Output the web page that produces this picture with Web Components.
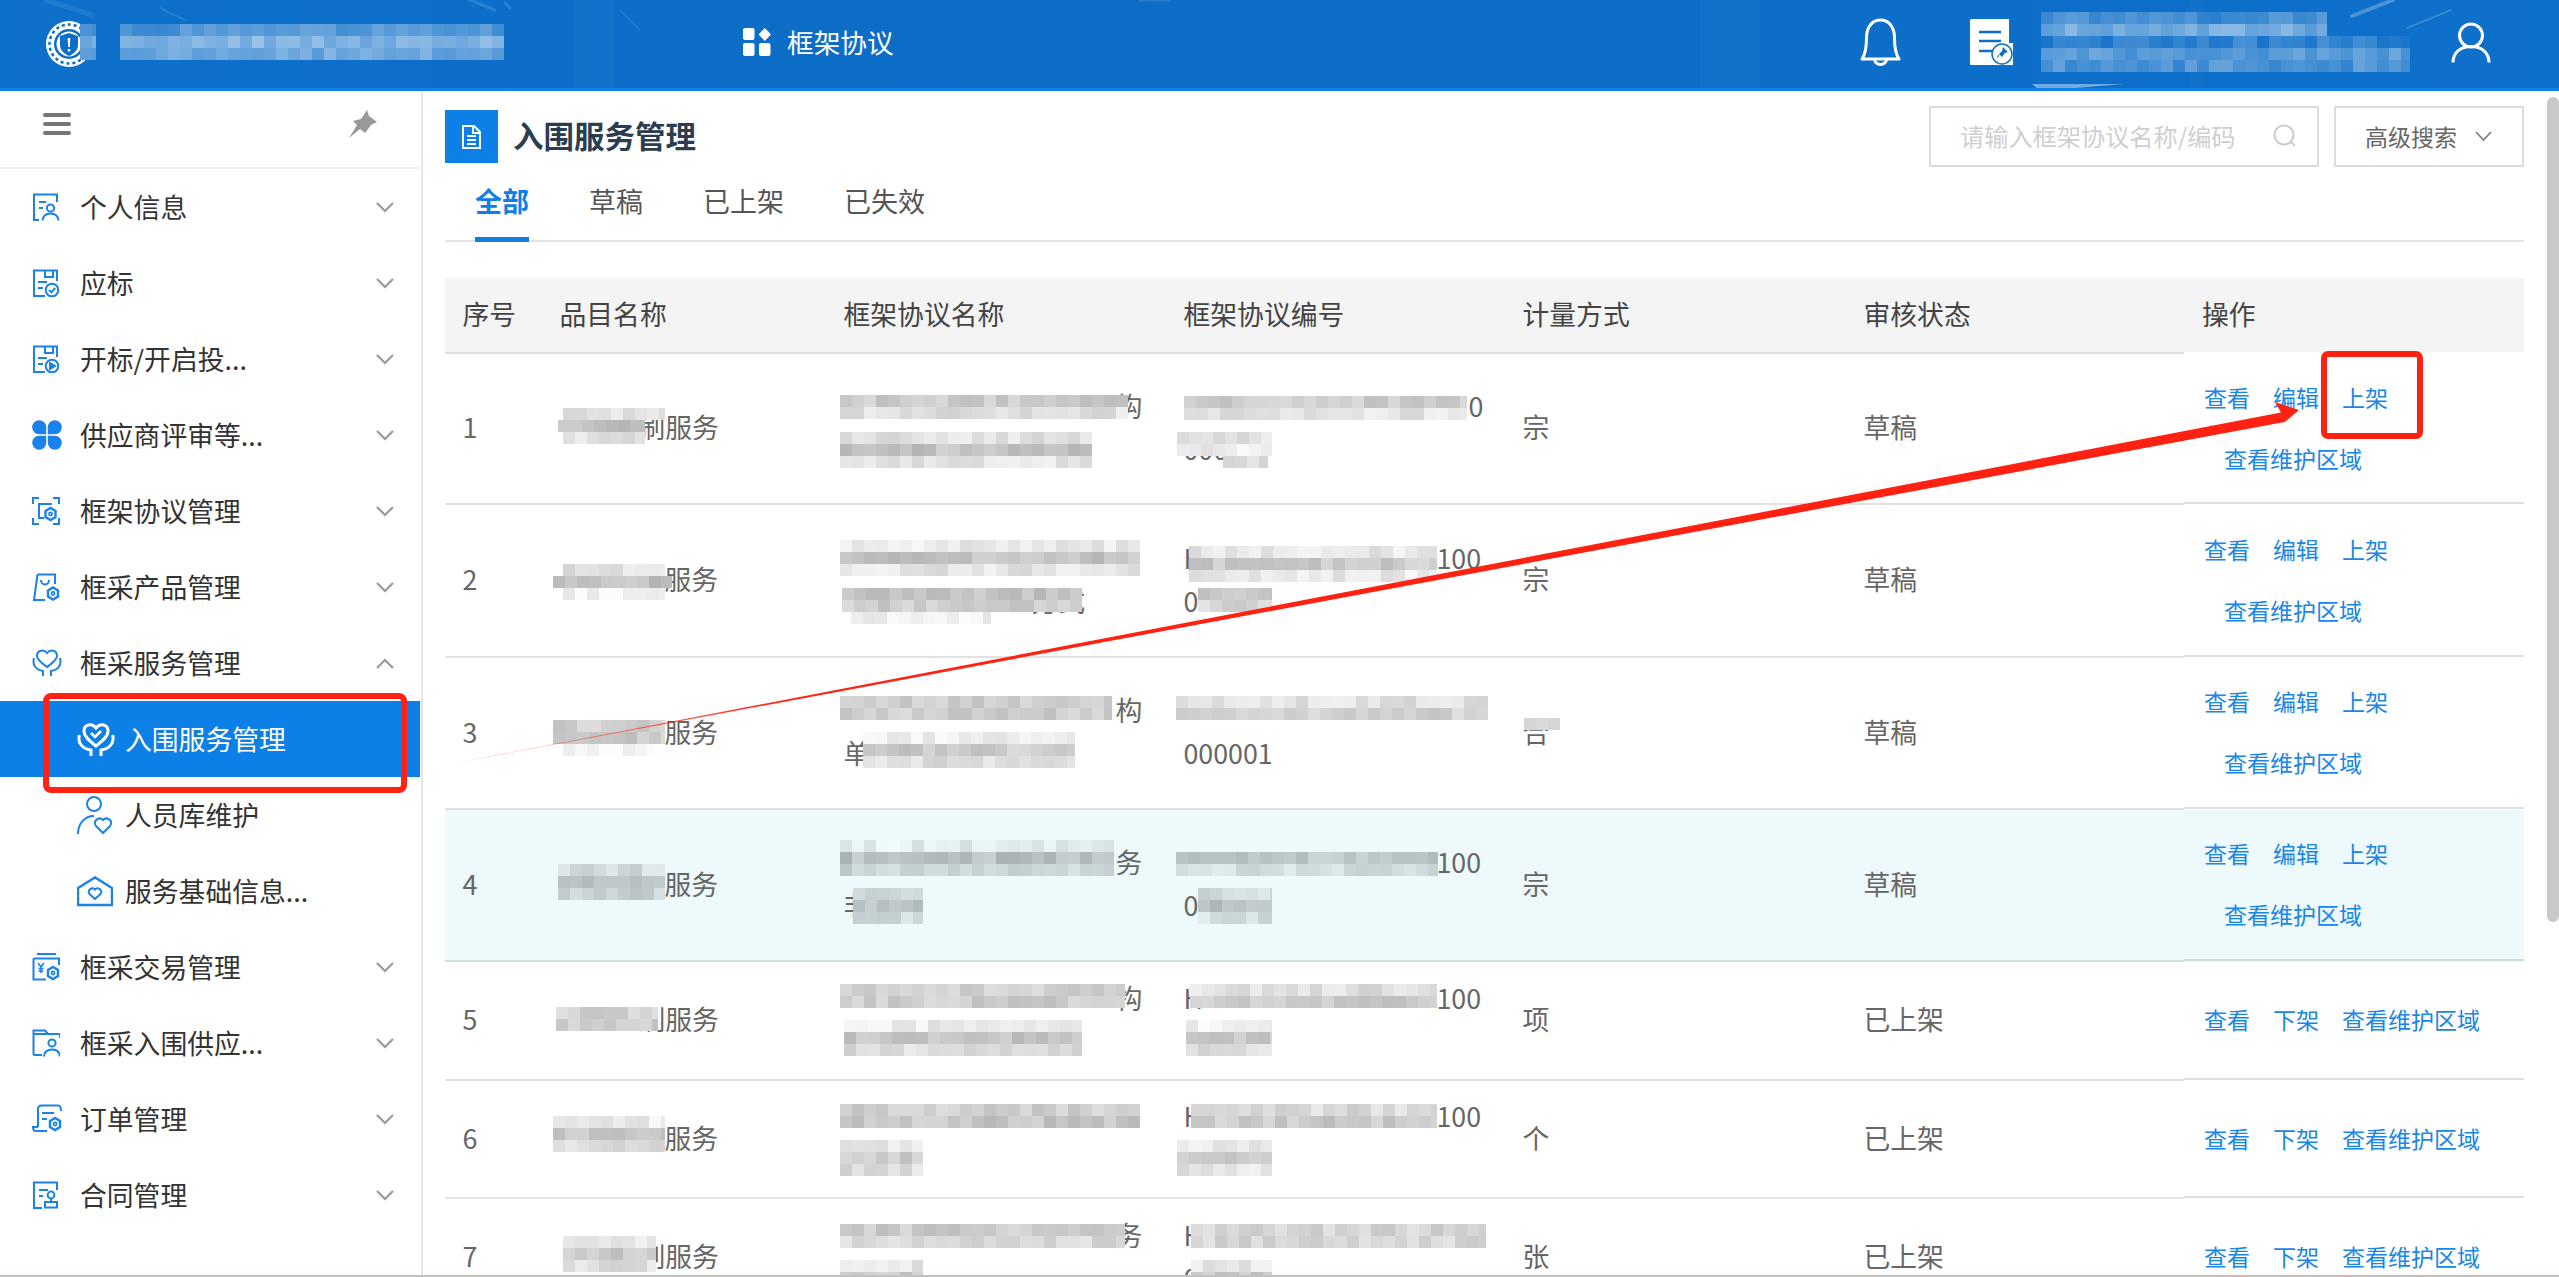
<!DOCTYPE html>
<html lang="zh-CN"><head><meta charset="utf-8"><title>入围服务管理</title>
<style>
html,body{margin:0;padding:0;background:#fff;height:100%;overflow:hidden}
body{font-family:"Noto Sans CJK SC","Liberation Sans",sans-serif;--cols:97px 284px 340px 339px 341px 338px 340px}
</style></head><body>
<app-shell>
  <app-header slot="header"></app-header>
  <side-menu slot="side">
    <menu-item icon="profile" arrow="down">个人信息</menu-item>
    <menu-item icon="bid" arrow="down">应标</menu-item>
    <menu-item icon="open" arrow="down">开标/开启投...</menu-item>
    <menu-item icon="clover" arrow="down">供应商评审等...</menu-item>
    <menu-item icon="frame" arrow="down">框架协议管理</menu-item>
    <menu-item icon="bag" arrow="down">框采产品管理</menu-item>
    <menu-item icon="hands" arrow="up">框采服务管理</menu-item>
    <menu-item icon="handscheck" sub active>入围服务管理</menu-item>
    <menu-item icon="personheart" sub>人员库维护</menu-item>
    <menu-item icon="house" sub>服务基础信息...</menu-item>
    <menu-item icon="trade" arrow="down">框采交易管理</menu-item>
    <menu-item icon="folder" arrow="down">框采入围供应...</menu-item>
    <menu-item icon="scroll" arrow="down">订单管理</menu-item>
    <menu-item icon="contract" arrow="down">合同管理</menu-item>
  </side-menu>
  <main-pane slot="main">
    <page-head>入围服务管理</page-head>
    <tab-bar>
      <tab-item active>全部</tab-item><tab-item>草稿</tab-item><tab-item>已上架</tab-item><tab-item>已失效</tab-item>
    </tab-bar>
    <data-table>
      <table-row h="76" head>
        <t-cell head>序号</t-cell><t-cell head>品目名称</t-cell><t-cell head>框架协议名称</t-cell><t-cell head>框架协议编号</t-cell><t-cell head>计量方式</t-cell><t-cell head>审核状态</t-cell><t-cell head last>操作</t-cell>
      </table-row>
      <table-row h="151">
        <t-cell>1</t-cell><t-cell><t-line pad="79">刷服务</t-line></t-cell>
        <t-cell><t-line pad="272">构</t-line><t-line></t-line></t-cell>
        <t-cell><t-line pad="285">0</t-line><t-line>000</t-line></t-cell>
        <t-cell>宗</t-cell><t-cell>草稿</t-cell>
        <act-cell><act-line><act-link>查看</act-link><act-link>编辑</act-link><act-link>上架</act-link></act-line><act-line second><act-link>查看维护区域</act-link></act-line></act-cell>
      </table-row>
      <table-row h="153">
        <t-cell>2</t-cell><t-cell><t-line pad="105">服务</t-line></t-cell>
        <t-cell><t-line></t-line><t-line pad="188">方式</t-line></t-cell>
        <t-cell><t-line><t-seg w="253">H</t-seg>100</t-line><t-line>0</t-line></t-cell>
        <t-cell>宗</t-cell><t-cell>草稿</t-cell>
        <act-cell><act-line><act-link>查看</act-link><act-link>编辑</act-link><act-link>上架</act-link></act-line><act-line second><act-link>查看维护区域</act-link></act-line></act-cell>
      </table-row>
      <table-row h="152">
        <t-cell>3</t-cell><t-cell><t-line pad="105">服务</t-line></t-cell>
        <t-cell><t-line pad="272">构</t-line><t-line>单</t-line></t-cell>
        <t-cell><t-line></t-line><t-line>000001</t-line></t-cell>
        <t-cell>合</t-cell><t-cell>草稿</t-cell>
        <act-cell><act-line><act-link>查看</act-link><act-link>编辑</act-link><act-link>上架</act-link></act-line><act-line second><act-link>查看维护区域</act-link></act-line></act-cell>
      </table-row>
      <table-row h="152" hl>
        <t-cell hl>4</t-cell><t-cell hl><t-line pad="105">服务</t-line></t-cell>
        <t-cell hl><t-line pad="272">务</t-line><t-line>非</t-line></t-cell>
        <t-cell hl><t-line pad="253">100</t-line><t-line>0</t-line></t-cell>
        <t-cell hl>宗</t-cell><t-cell hl>草稿</t-cell>
        <act-cell hl><act-line><act-link>查看</act-link><act-link>编辑</act-link><act-link>上架</act-link></act-line><act-line second><act-link>查看维护区域</act-link></act-line></act-cell>
      </table-row>
      <table-row h="119">
        <t-cell>5</t-cell><t-cell><t-line pad="79">刷服务</t-line></t-cell>
        <t-cell><t-line pad="272">构</t-line><t-line></t-line></t-cell>
        <t-cell><t-line><t-seg w="253">H</t-seg>100</t-line><t-line></t-line></t-cell>
        <t-cell>项</t-cell><t-cell>已上架</t-cell>
        <act-cell><act-line><act-link>查看</act-link><act-link>下架</act-link><act-link>查看维护区域</act-link></act-line></act-cell>
      </table-row>
      <table-row h="118">
        <t-cell>6</t-cell><t-cell><t-line pad="105">服务</t-line></t-cell>
        <t-cell><t-line></t-line><t-line>非</t-line></t-cell>
        <t-cell><t-line><t-seg w="253">H</t-seg>100</t-line><t-line></t-line></t-cell>
        <t-cell>个</t-cell><t-cell>已上架</t-cell>
        <act-cell><act-line><act-link>查看</act-link><act-link>下架</act-link><act-link>查看维护区域</act-link></act-line></act-cell>
      </table-row>
      <table-row h="119">
        <t-cell>7</t-cell><t-cell><t-line pad="79">刷服务</t-line></t-cell>
        <t-cell><t-line pad="272">务</t-line><t-line></t-line></t-cell>
        <t-cell><t-line>H</t-line><t-line>0</t-line></t-cell>
        <t-cell>张</t-cell><t-cell>已上架</t-cell>
        <act-cell><act-line><act-link>查看</act-link><act-link>下架</act-link><act-link>查看维护区域</act-link></act-line></act-cell>
      </table-row>
    </data-table>
  </main-pane>
  <annotation-layer slot="over"></annotation-layer>
</app-shell>
<script>
const B='#1a82e8';
function gear(x,y){return `<path d="M${x-5} ${y-3}L${x} ${y-6}L${x+5} ${y-3}V${y+3}L${x} ${y+6}L${x-5} ${y+3}Z" stroke-width="2.4"/><circle cx="${x}" cy="${y}" r="1.6" stroke-width="1.6"/>`;}
const ICONS={
 profile:[28,`<path d="M25 9V1.5H2V27H7"/><path d="M7 9H14M7 15H11"/><circle cx="18.500" cy="15" r="3.600"/><path d="M10.500 27.500C11 22.500 14.500 20.500 18.500 20.500C22.500 20.500 26 22.500 26.500 27.500"/>`],
 bid:[28,`<path d="M25 12V1.500H2V27H13"/><path d="M13 1.500V8H21V1.500"/><path d="M6 13H15M6 19H11"/><circle cx="20" cy="21" r="6.300"/><path d="M17 21L19.300 23.300L23.200 19"/>`],
 open:[28,`<path d="M25 12V1.500H2V27H13"/><path d="M13 1.500V8H21V1.500"/><path d="M6 13H15M6 19H11"/><circle cx="20" cy="21" r="6.300"/><path d="M18 18L23 21L18 24Z" fill="${B}"/>`],
 clover:[30,`<g fill="${B}" stroke="none"><path d="M14.200 14.200H7.200A7 7 0 1 1 14.200 7.200Z"/><path d="M15.800 14.200H22.800A7 7 0 1 0 15.800 7.200Z"/><path d="M14.200 15.800H7.200A7 7 0 1 0 14.200 22.800Z"/><path d="M15.800 15.800H22.800A7 7 0 1 1 15.800 22.800Z"/></g>`],
 frame:[28,`<path d="M1 7V1H7M21 1H27V7M1 21V27H7M21 27H27V21"/><path d="M20 7H7V21H12"/>${gear(18.500,17)}`],
 bag:[28,`<path d="M5.500 1.500H23V11M5.500 1.500L2 27H13"/><path d="M9 7C9 13 17 13 17 7"/>${gear(21,20.500)}`],
 hands:[30,`<path d="M15 5C12 1 5 2 5 8C5 12 11 16 15 19C19 16 25 12 25 8C25 2 18 1 15 5Z"/><path d="M2 10C0 17 4 22 11 23V28M28 10C30 17 26 22 19 23V28"/>`],
 personheart:[36,`<circle cx="17" cy="8" r="7"/><path d="M1 38C1 27 8 20 17 20"/><path d="M26 37L19 30C15 25 22 20 26 24C30 20 37 25 33 30Z"/>`],
 house:[36,`<path d="M1 12L18 1.500L35 12V29H1Z" stroke-width="2.400"/><path d="M18 23L12.500 18C9.500 14 15.500 10.500 18 13.500C20.500 10.500 26.500 14 23.500 18Z"/>`],
 trade:[28,`<path d="M5 1H24"/><path d="M1.500 5.500H27V12M1.500 5.500V26.500H14"/><path d="M6 10L9 14L12 10M9 14V20M6.500 15.500H11.500M6.500 18H11.500" stroke-width="1.600"/>${gear(21,20)}`],
 folder:[28,`<path d="M1.500 26V1.500H13L16 5H28V9M1.500 5H16"/><path d="M1.500 26H10"/><circle cx="20" cy="14" r="3.600"/><path d="M12 27.500C12.500 22.500 16 20.500 20 20.500C24 20.500 27.500 22.500 28 27.500"/>`],
 scroll:[30,`<path d="M6 23V5C6 2.500 7.500 1.500 10 1.500H26C28.500 1.500 29 3.500 29 7"/><path d="M10 9H22M10 15H15"/><path d="M6 23H1C1 26 2.500 27 4 27H15"/>${gear(23,20)}`],
 contract:[28,`<path d="M25 9V1.500H2V27H10"/><path d="M7 9H16M7 15H11"/><circle cx="19" cy="14" r="3.400"/><path d="M19 17.500V20.500"/><path d="M13 21H25V26.500H13Z"/>`]
};
function iconSvg(name){
 if(name==='handscheck')return `<svg width="38" height="35" viewBox="0 0 38 35" fill="none" stroke="#fff" stroke-width="3"><path d="M19 6C15 1 7 2 7 9C7 15 14 20 19 24C24 20 31 15 31 9C31 2 23 1 19 6Z"/><path d="M14 11L18 15L24 9" stroke-width="2.600"/><path d="M2.500 13C0 21 6 27 14 28V34M35.500 13C38 21 32 27 24 28V34"/></svg>`;
 const[n,s]=ICONS[name];
 const w=(name==='personheart'||name==='house')?36:(n===30?30:28), h=name==='personheart'?39:(name==='house'?31:n);
 return `<svg width="${w}" height="${h}" viewBox="0 0 ${w} ${h}" fill="none" stroke="${B}" stroke-width="2">${s}</svg>`;
}
function mk(name,html,init){
 customElements.define(name,class extends HTMLElement{
  constructor(){super();this.attachShadow({mode:'open'}).innerHTML=html;}
  connectedCallback(){init&&init(this);}
 });
}
mk('app-shell',`<style>:host{display:grid;position:relative;width:2559px;height:1277px;overflow:hidden;grid-template-columns:423px 1fr;grid-template-rows:91px 1fr;box-sizing:border-box;border-bottom:2px solid #c4c0bd;background:#fff}
.h{grid-column:1/3}.o{position:absolute;inset:0;pointer-events:none}</style>
<div class="h"><slot name="header"></slot></div><slot name="side"></slot><slot name="main"></slot><div class="o"><slot name="over"></slot></div>`);

mk('app-header',`<style>:host{display:flex;align-items:center;position:relative;height:91px;box-sizing:border-box;border-bottom:3px solid #0e80e6;background:linear-gradient(90deg,#0d70cb 0,#0c6cc6 45%,#0d70ca 100%);color:#fff;overflow:hidden}
.tex{position:absolute;left:0;top:0}
.logo{margin-left:46px;display:block;position:relative}
.nav{position:absolute;left:743px;top:28px;display:flex;align-items:center;gap:15px;font-size:26.700px;line-height:28px;height:28px}
.r{position:relative;margin-left:auto;display:flex;align-items:flex-start;height:100%}
.bell{margin-top:18px;margin-right:69px}.doc{margin-top:19px}.user{margin-top:22px;margin-left:438px;margin-right:68px}
</style>
<svg class="tex" width="2559" height="91" fill="none"><g stroke="#fff" stroke-linecap="round"><path d="M46 0L92 15" stroke-width="5" opacity=".08"/><path d="M160 8L185 20" stroke-width="2" opacity=".1"/><path d="M470 0L495 10M505 3L510 8" stroke-width="3" opacity=".12"/><path d="M620 10L640 30" stroke-width="1.500" opacity=".1"/><path d="M2352 16L2393 0" stroke-width="4" opacity=".25"/><path d="M2407 28L2451 10" stroke-width="1.500" opacity=".2"/><path d="M1140 0L1170 0" stroke-width="3" opacity=".12"/></g><g fill="#fff" opacity=".025"><rect x="575" width="40" height="91"/><rect x="1700" width="60" height="91"/><rect x="2190" width="14" height="91"/></g><polygon points="2032,84 2124,84 2076,88 2040,91" fill="#6fabe2"/></svg>
<svg class="logo" width="46" height="48" viewBox="0 0 46 48"><circle cx="23" cy="24" r="23" fill="#fff"/><circle cx="23" cy="24" r="19.500" fill="none" stroke="#0d6ec8" stroke-width="2.500" stroke-dasharray="3 3"/><circle cx="23" cy="24" r="15" fill="#0d6ec8"/><circle cx="23" cy="24" r="12.500" fill="#fff"/><path d="M23 13L32 16V25C32 31 27 34 23 36C19 34 14 31 14 25V16Z" fill="#0d6ec8"/><path d="M21.700 18H24.300L23.800 27H22.200Z M21.800 29H24.200V31.500H21.800Z" fill="#fff"/></svg>
<div class="nav"><svg width="29" height="28" viewBox="0 0 29 28" fill="#fff"><rect width="11.500" height="12" rx="2"/><rect y="15" width="11.500" height="13" rx="2"/><rect x="16" y="15" width="11.500" height="13" rx="2"/><path d="M21.800 0L28 6.500L21.800 13L15.600 6.500Z"/></svg><span>框架协议</span></div>
<div class="r">
<svg class="bell" width="41" height="48" viewBox="0 0 41 48" fill="none" stroke="#fff" stroke-width="3"><path d="M2 41C6 35 6.500 29 6.500 20C6.500 8 13 2 20.500 2C28 2 34.500 8 34.500 20C34.500 29 35 35 39 41Z" stroke-linejoin="round"/><path d="M14.500 42A6.300 6.300 0 0 0 26.500 42"/></svg>
<svg class="doc" width="43" height="46" viewBox="0 0 43 46"><path d="M0 1.500A1.500 1.500 0 0 1 1.500 0H39V24H43V46H1.500A1.500 1.500 0 0 1 0 44.500Z" fill="#fff"/><path d="M9 13H31M9 22H31M9 32H22" stroke="#0d6ec8" stroke-width="2.500"/><path d="M40 0L43 5V0Z" fill="#0d6ec8"/><circle cx="32" cy="35" r="10" fill="#fff" stroke="#0d6ec8" stroke-width="1.500"/><path d="M33 28L38 33L35 34L32 38L29 35L32 32Z M29.500 36.500L26.500 40L28 36Z" fill="#0d6ec8"/></svg>
<svg class="user" width="40" height="41" viewBox="0 0 40 41" fill="none" stroke="#fff" stroke-width="3"><ellipse cx="20" cy="13.500" rx="11.500" ry="11.500"/><path d="M2 40.500C2 30 10 24.500 20 24.500C30 24.500 38 30 38 40.500"/></svg>
</div>`);

mk('side-menu',`<style>:host{display:block;width:423px;box-sizing:border-box;border-right:2px solid #e6e6e6;background:#fff;overflow:hidden}
.top{height:78px;box-sizing:border-box;border-bottom:2px solid #f1f1f1;position:relative;display:flex;justify-content:space-between;padding:19px 44px 0 43px;align-items:flex-start}
.bars{display:flex;flex-direction:column;gap:5px;margin-top:3px}.bars i{display:block;width:28px;height:4px;border-radius:2px;background:#777}</style>
<div class="top"><div class="bars"><i></i><i></i><i></i></div>
<svg width="28" height="28" viewBox="0 0 28 28" fill="#999"><path d="M18 0L20 6L28 12L22 15L16 23L11 19L0 28L8 15L4 11L12 9Z"/></svg></div>
<slot></slot>`);

mk('menu-item',`<style>:host{display:flex;align-items:center;height:76px;padding-left:32px;font-size:26.800px;color:#333;box-sizing:border-box;width:100%}
:host([sub]){padding-left:77px}
:host([active]){background:#0c80e6;color:#fff;width:420px}
.i{width:48px;display:flex;align-items:center;flex:none}:host([sub]) .i{width:48px}
.x{display:block;padding-bottom:2px}
.a{margin-left:auto;margin-right:27px;display:block}
</style><span class="i"></span><span class="x"><slot></slot></span><span class="a"></span>`,el=>{
 const r=el.shadowRoot;
 r.querySelector('.i').innerHTML=iconSvg(el.getAttribute('icon'));
 const a=el.getAttribute('arrow');
 if(a)r.querySelector('.a').innerHTML=`<svg width="18" height="11" viewBox="0 0 18 11" fill="none" stroke="#999" stroke-width="2.200" style="display:block"><path d="${a==='up'?'M1 10L9 2L17 10':'M1 1L9 9L17 1'}"/></svg>`;
});

mk('main-pane',`<style>:host{display:block;position:relative;padding:0 35px 0 22px;overflow:hidden}
.sb{position:absolute;right:0;top:6px;width:12px;height:825px;background:#c9c9c9;border-radius:6px}</style>
<slot></slot><div class="sb"></div>`);

mk('page-head',`<style>:host{display:flex;align-items:flex-start;padding-top:15px;height:76px;box-sizing:border-box}
.ic{width:53px;height:53px;margin-top:4px;background:#0c80e6;display:flex;align-items:center;justify-content:center;flex:none}
.t{margin-left:15px;margin-top:3px;line-height:53px;font-size:30.500px;font-weight:700;color:#2b3d50}
.s{margin-left:auto;display:flex;gap:15px}
.inp{width:390px;height:61px;box-sizing:border-box;border:2px solid #dcdcdc;display:flex;align-items:center;padding:0 20px 3px 29px;font-size:24.200px;color:#cfcfcf;justify-content:space-between}
.inp svg{margin-top:2px}
.btn{width:190px;height:61px;box-sizing:border-box;border:2px solid #dcdcdc;display:flex;align-items:center;padding:0 0 2px 29px;font-size:23px;color:#666;gap:18px}
</style><div class="ic"><svg width="21" height="24" viewBox="0 0 21 24" fill="none" stroke="#fff" stroke-width="2"><path d="M2 1H13L19 7V23H2Z"/><path d="M12 1V8H19" fill="none"/><path d="M6 11H15M6 15H15M6 19H15"/></svg></div>
<div class="t"><slot></slot></div>
<div class="s"><div class="inp"><span>请输入框架协议名称/编码</span><svg width="24" height="24" viewBox="0 0 24 24" fill="none" stroke="#ccc" stroke-width="2"><circle cx="11" cy="11" r="9.500"/><path d="M18 18L22 22"/></svg></div>
<div class="btn"><span>高级搜索</span><svg width="17" height="10" viewBox="0 0 17 10" fill="none" stroke="#777" stroke-width="1.600"><path d="M1 1L8.500 9L16 1"/></svg></div></div>`);

mk('tab-bar',`<style>:host{display:flex;gap:60px;height:75px;box-sizing:border-box;padding:15px 0 0 30px;border-bottom:2px solid #e4e4e4;margin-bottom:36px}</style><slot></slot>`);
mk('tab-item',`<style>:host{display:block;font-size:27px;line-height:38px;color:#555;height:60px;box-sizing:border-box;position:relative}
:host([active]){color:#0c80e6;font-weight:700;border-bottom:5px solid #0c80e6}</style><slot></slot>`);

mk('data-table',`<style>:host{display:block}</style><slot></slot>`);
mk('table-row',`<style>:host{display:grid;grid-template-columns:var(--cols);box-sizing:border-box;font-size:26.800px;color:#666}
:host([hl]){background:#eef9fb}</style><slot></slot>`,el=>{el.style.height=el.getAttribute('h')+'px';});
mk('t-cell',`<style>:host{display:flex;align-items:center;padding-left:17.500px;box-sizing:border-box;border-bottom:2px solid #e2e2e2;min-width:0}
:host([hl]){border-bottom-color:#cfdfe2}
:host([head]){background:#f4f4f4;color:#444;border-bottom-color:#e0e0e0;background-clip:padding-box}
:host([last]){padding-left:18px;border-bottom-color:#fff}
div{width:100%;padding-bottom:4px}</style><div><slot></slot></div>`);
mk('t-line',`<style>:host{display:block;line-height:43px;height:43px;white-space:nowrap}</style><slot></slot>`,el=>{const p=el.getAttribute('pad');if(p)el.style.paddingLeft=p+'px';});
mk('t-seg',`<style>:host{display:inline-block;overflow:hidden;vertical-align:bottom}</style><slot></slot>`,el=>{el.style.width=el.getAttribute('w')+'px';});
mk('act-cell',`<style>:host{display:flex;align-items:center;padding-left:20px;box-sizing:border-box;border-bottom:2px solid #e0e0e0;margin-bottom:1px}
:host([hl]){border-bottom-color:#cfdfe2}div{width:100%;padding-bottom:1px}</style><div><slot></slot></div>`);
mk('act-line',`<style>:host{display:block;line-height:61px;height:61px;white-space:nowrap;font-size:23px}:host([second]){padding-left:20px}</style><slot></slot>`);
mk('act-link',`<style>:host{display:inline-block;color:#1a86e8;margin-right:23px}</style><slot></slot>`);

// overlays: redaction mosaics and the red annotation marks sit over the page
function rng(a){return()=>{a|=0;a=a+0x6D2B79F5|0;let t=Math.imul(a^a>>>15,1|a);t=t+Math.imul(t^t>>>7,61|t)^t;return((t^t>>>14)>>>0)/4294967296;};}
const P=[ // x0,x1,y,[row lightness],kind
 // row 1
 [563,665,408,[230]],[558,645,420,[196]],[563,645,432,[228]],
 [840,1128,395,[205,226]],[840,1092,432,[228,196,230]],
 [1184,1467,396,[208,230]],[1177,1272,432,[226,236]],[1223,1268,456,[226]],
 // row 2
 [563,665,564,[226]],[553,672,576,[196]],[563,665,588,[242]],
 [840,1140,540,[236,198,230]],[842,1082,588,[196,206]],[851,991,612,[243]],
 [1189,1437,546,[232,206,234]],[1198,1272,588,[205,216]],
 // row 3
 [553,665,720,[210,205]],[563,655,744,[248]],
 [840,1112,696,[208,206]],[863,1075,732,[238,205,222]],
 [1176,1488,696,[226,212]],[1524,1560,718,[212]],
 // row 4
 [558,665,864,[222,195,212],'b'],[840,1114,840,[238,195,215],'b'],[853,923,888,[215,195,220],'b'],
 [1176,1438,852,[200,222],'b'],[1198,1272,888,[220,195,225],'b'],
 // row 5
 [556,658,1007,[212,205]],[840,1125,984,[208,206]],[844,1082,1020,[238,200,222]],
 [1190,1437,984,[225,205]],[1186,1272,1020,[246,205,225]],
 // row 6
 [553,665,1116,[240,205,222]],[840,1140,1104,[210,200]],[840,923,1140,[236,205,222]],
 [1191,1437,1104,[220,205]],[1177,1272,1140,[240,205,228]],
 // row 7
 [563,656,1236,[236,205,225]],[840,1125,1224,[205,220]],[840,923,1260,[232,205]],
 [1191,1486,1224,[215,216]],[1191,1272,1260,[232,205]],
 // header
 [80,96,24,[.3,.45,.4],'h'],[120,504,24,[.28,.48,.4],'h'],
 [2041,2327,12,[.22,.42],'h'],[2041,2410,36,[.14,.32,.26],'h']
];
function tiles(){
 let s='';
 for(const[x0,x1,y0,rows,k]of P){
  const r=rng(x0*7+y0*13);
  rows.forEach((l,i)=>{
   for(let x=x0;x<x1;x+=12){
    const w=Math.min(12,x1-x),y=y0+i*12;let c;
    if(k==='h'){const t=Math.max(.05,Math.min(.75,l+(r()-.5)*.2));
      c=`rgb(${13+242*t|0},${110+145*t|0},${200+55*t|0})`;}
    else{const v=Math.min(252,l+(r()-.55)*30)|0;
      c=k==='b'?`rgb(${v-10},${v},${v+2})`:`rgb(${v},${v},${v})`;}
    s+=`<rect x="${x}" y="${y}" width="${w}" height="12" fill="${c}"/>`;
   }
  });
 }
 return s;
}
mk('annotation-layer',`<style>:host{display:block;position:absolute;inset:0}svg{display:block}</style>
<svg width="2559" height="1277" viewBox="0 0 2559 1277" fill="none">
<defs><linearGradient id="g" gradientUnits="userSpaceOnUse" x1="445" y1="765" x2="800" y2="697"><stop offset="0" stop-color="#ff2111" stop-opacity=".3"/><stop offset="1" stop-color="#ff2111"/></linearGradient></defs>
<g class="t" shape-rendering="crispEdges"></g>
<rect x="46" y="696" width="358" height="94" rx="5" stroke="#ff2111" stroke-width="6"/>
<rect x="2324" y="354" width="96" height="82" rx="4" stroke="#ff2111" stroke-width="6"/>
<polygon points="445,765 2281,412.500 2275,402 2299,410 2279,427 2284.500,422" fill="url(#g)"/>
</svg>`,el=>{el.shadowRoot.querySelector('.t').innerHTML=tiles();});
</script>
</body></html>
